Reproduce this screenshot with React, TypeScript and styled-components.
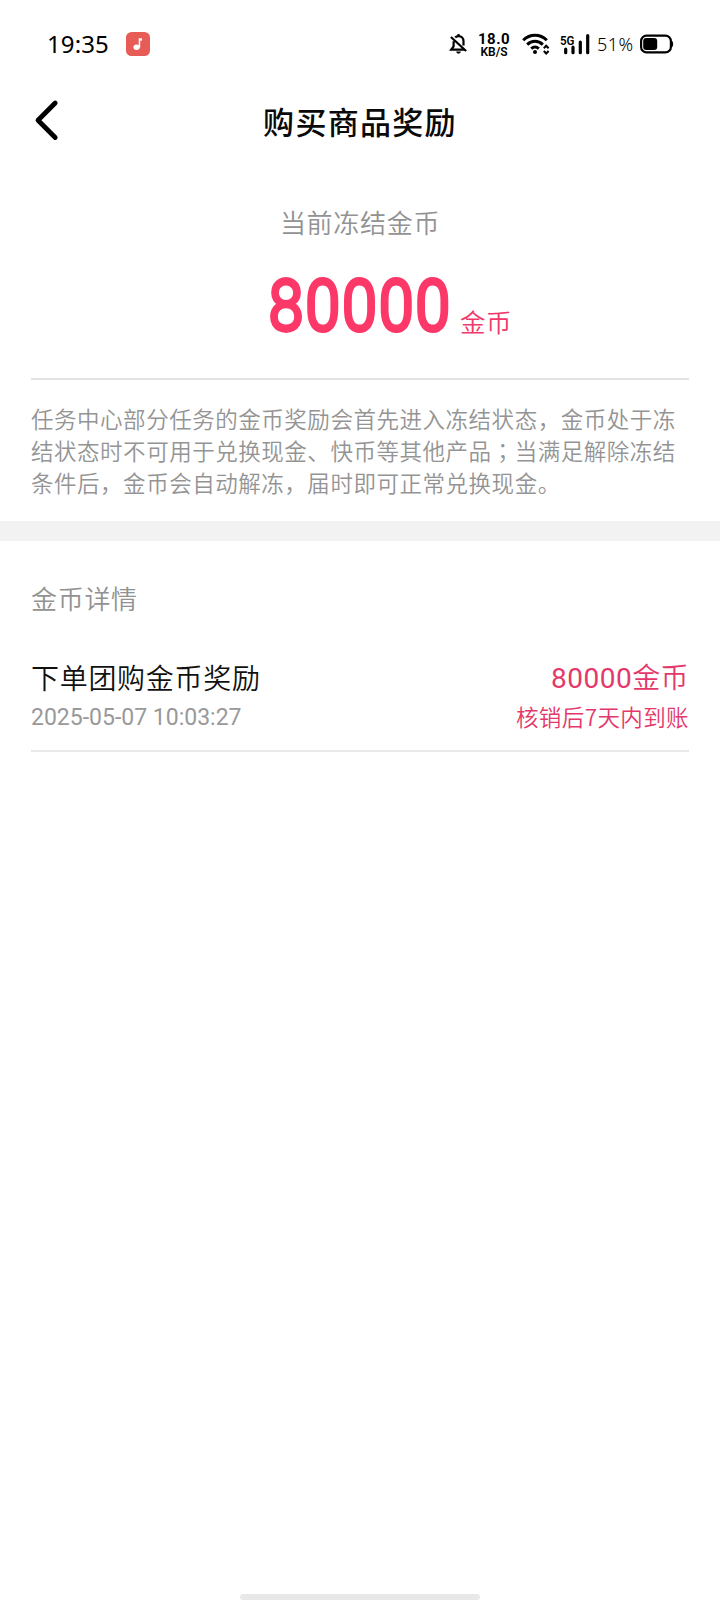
import React from "react";
import styled, { createGlobalStyle } from "styled-components";

const GlobalStyle = createGlobalStyle`
  * { box-sizing: border-box; }
  body {
    margin: 0;
    background: #fff;
    font-family: "Noto Sans CJK SC", sans-serif;
  }
`;

const Screen = styled.div`
  width: 720px;
  height: 1600px;
  display: flex;
  flex-direction: column;
  background: #fff;
  overflow: hidden;
`;

const StatusBar = styled.div`
  height: 88px;
  padding: 0 46px 0 47px;
  display: flex;
  justify-content: space-between;
  align-items: center;
  color: #000;
`;

const StatusGroup = styled.div`
  display: flex;
  align-items: center;
`;

const Clock = styled.span`
  width: 63px;
  font: 400 24px/30px "Noto Sans", sans-serif;
  letter-spacing: 0.1px;
  white-space: nowrap;
`;

const MusicIcon = styled.svg`
  width: 24px;
  height: 24px;
  margin-left: 16px;
`;

const Glyph = styled.svg<{ $w: number; $h: number; $left?: number }>`
  width: ${(p) => p.$w}px;
  height: ${(p) => p.$h}px;
  margin-left: ${(p) => p.$left ?? 0}px;
  flex: none;
  overflow: visible;
`;

const NetSpeed = styled.div`
  width: 32px;
  margin-left: 9px;
  margin-right: 1px;
  padding-top: 3px;
  display: flex;
  flex-direction: column;
  align-items: center;
  font-family: Roboto, sans-serif;
  white-space: nowrap;
`;

const SpeedValue = styled.span`
  font-size: 15px;
  font-weight: 700;
  line-height: 13px;
  letter-spacing: 0.5px;
`;

const SpeedUnit = styled.span`
  font-size: 12px;
  font-weight: 600;
  line-height: 13px;
`;

const Battery = styled.span`
  width: 37px;
  margin-left: 6px;
  font: 350 18px/22px "Noto Sans", sans-serif;
  letter-spacing: 0.5px;
  white-space: nowrap;
`;

const Header = styled.header`
  height: 72px;
  padding: 0 32px;
  display: grid;
  grid-template-columns: 40px 1fr 40px;
  align-items: start;
`;

const BackButton = styled.button`
  padding: 11px 0 0 2px;
  border: 0;
  background: none;
  display: flex;
`;

const Title = styled.h1`
  margin: 10px 0 0;
  font-size: 31px;
  line-height: 46px;
  font-weight: 500;
  letter-spacing: 1.3px;
  text-align: center;
  color: #0a0a0a;
`;

const Summary = styled.section`
  margin: 0 31px;
  height: 220px;
  display: flex;
  flex-direction: column;
  align-items: center;
  border-bottom: 2px solid #e3e3e3;
`;

const SummaryLabel = styled.div`
  margin-top: 42px;
  font-size: 26px;
  line-height: 40px;
  font-weight: 350;
  letter-spacing: 0.7px;
  color: #929292;
`;

const AmountRow = styled.div`
  width: 100%;
  margin-top: 19px;
  display: grid;
  grid-template-columns: 1fr 184px 1fr;
  align-items: start;
  color: #fc3869;
`;

const Amount = styled.div`
  grid-column: 2;
  padding: 3px 0 0 2px;
  display: flex;
  justify-content: center;
  font: 300 70px/84px Roboto, sans-serif;
  letter-spacing: 3.1px;
  -webkit-text-stroke: 4.8px #fc3869;
  stroke-linejoin: round;
  white-space: nowrap;
`;

const AmountDigits = styled.span`
  transform: scaleX(0.875);
`;

const AmountUnit = styled.span`
  margin: 40px 0 0 8px;
  font-size: 25.5px;
  line-height: 40px;
  letter-spacing: 0.5px;
  font-weight: 350;
  color: #f0386a;
`;

const Notice = styled.p`
  margin: 0;
  height: 141px;
  padding: 22px 0 0 31px;
  font-size: 22.5px;
  line-height: 32px;
  font-weight: 350;
  letter-spacing: 0.53px;
  color: #949494;
  white-space: nowrap;
`;

const CenteredMark = styled.span`
  font-family: "Noto Sans CJK TC", sans-serif;
`;

const Divider = styled.div`
  height: 20px;
  background: #f2f2f2;
`;

const Details = styled.section`
  padding: 37px 31px 0;
  flex: 1;
`;

const DetailsTitle = styled.h2`
  margin: 0;
  font-size: 26px;
  line-height: 40px;
  font-weight: 350;
  letter-spacing: 0.7px;
  color: #929292;
`;

const Item = styled.div`
  margin-top: 38px;
  height: 96px;
  display: grid;
  grid-template-columns: 1fr auto;
  grid-template-rows: 44px 36px;
  border-bottom: 2px solid #e9e9e9;
`;

const ItemName = styled.span`
  font-size: 28px;
  line-height: 42px;
  letter-spacing: 0.7px;
  font-weight: 350;
  color: #111;
`;

const ItemAmount = styled.span`
  font: 350 28px/40px "Noto Sans CJK SC", sans-serif;
  letter-spacing: 0.4px;
  text-align: right;
  color: #e4386a;
`;

const ItemAmountDigits = styled.span`
  font-family: Roboto, sans-serif;
  line-height: 1;
  font-weight: 400;
  letter-spacing: 0.5px;
`;

const ItemTime = styled.span`
  font: 400 23px/36px Roboto, "Noto Sans CJK SC", sans-serif;
  color: #999;
`;

const ItemStatus = styled.span`
  font-size: 22.5px;
  line-height: 32px;
  letter-spacing: 0.4px;
  font-weight: 350;
  text-align: right;
  color: #e4386a;
`;

const HomeIndicator = styled.div`
  width: 240px;
  height: 6px;
  align-self: center;
  border-radius: 3px;
  background: #e8e8e8;
`;

export default function App() {
  return (
    <Screen>
      <GlobalStyle />
      <StatusBar>
        <StatusGroup>
          <Clock>19:35</Clock>
          <MusicIcon viewBox="0 0 24 24">
            <rect width="24" height="24" rx="5.5" fill="#e85c58" />
            <ellipse cx="10.6" cy="15.3" rx="3.1" ry="2.7" fill="#fff" />
            <path d="M12.7 15.5V6.2h3.2v2.6h-1.7v6.7z" fill="#fff" />
          </MusicIcon>
        </StatusGroup>
        <StatusGroup>
          <Glyph $w={20} $h={22} viewBox="0 0 20 22" fill="none" stroke="#000" strokeWidth="2.2">
            <path d="M4.6 8.3v5L2.2 16.6h13M6.2 4.4C7 3.5 8.2 3.1 9.5 3.1c3 0 5 2.2 5 5.2v4.3M9.5 1v2M1.9 4l15.2 14" />
            <path d="M7.2 18.6h4.6a2.3 2.1 0 0 1-4.6 0z" fill="#000" stroke="none" />
          </Glyph>
          <NetSpeed>
            <SpeedValue>18.0</SpeedValue>
            <SpeedUnit>KB/S</SpeedUnit>
          </NetSpeed>
          <Glyph $w={28} $h={22} $left={11} viewBox="0 0 28 22" fill="none" stroke="#000" strokeWidth="3">
            <path d="M1.2 7.2c6.8-6.7 16.8-6.7 23.6 0M5.2 11.6c4.5-4.4 11.1-4.4 15.6 0M9.2 15.7c2.3-2 5.3-2 7.6 0" />
            <circle cx="13" cy="19" r="2" fill="#000" stroke="none" />
            <path d="M21.8 15.3l2.4-2.5l2.4 2.5M21.8 18l2.4 2.5l2.4-2.5" strokeWidth="2" />
          </Glyph>
          <Glyph $w={30} $h={22} $left={11} viewBox="0 0 30 22">
            <text x="-1" y="11.8" fontFamily="Roboto, sans-serif" fontSize="13" fontWeight="600" textLength="14.5" lengthAdjust="spacingAndGlyphs">5G</text>
            <path d="M4.7 16v3.7M12 14.2v5.5M19.3 9v10.7M26.7 2.5v17.2" stroke="#000" strokeWidth="3.2" strokeLinecap="round" />
          </Glyph>
          <Battery>51%</Battery>
          <Glyph $w={34} $h={20} $left={6} viewBox="0 0 34 20">
            <rect x="1.1" y="1.6" width="29.8" height="16.8" rx="5.5" fill="none" stroke="#000" strokeWidth="2.2" />
            <rect x="3.2" y="4" width="14" height="12" rx="3" />
            <path d="M31.5 6.5c2.2 1 2.2 6 0 7z" />
          </Glyph>
        </StatusGroup>
      </StatusBar>

      <Header>
        <BackButton aria-label="返回">
          <Glyph $w={26} $h={42} viewBox="0 0 26 42" fill="none" stroke="#000" strokeWidth="4.8" strokeLinecap="round" strokeLinejoin="round">
            <path d="M21.2 4L4 21.3L21.2 38.5" />
          </Glyph>
        </BackButton>
        <Title>购买商品奖励</Title>
      </Header>

      <Summary>
        <SummaryLabel>当前冻结金币</SummaryLabel>
        <AmountRow>
          <Amount>
            <AmountDigits>80000</AmountDigits>
          </Amount>
          <AmountUnit>金币</AmountUnit>
        </AmountRow>
      </Summary>

      <Notice>
        {"任务中心部分任务的金币奖励会首先进入冻结状态\uFF0C金币处于冻"}
        <br />
        结状态时不可用于兑换现金、快币等其他产品
        <CenteredMark>{"\uFF1B"}</CenteredMark>
        当满足解除冻结
        <br />
        {"条件后\uFF0C金币会自动解冻\uFF0C届时即可正常兑换现金。"}
      </Notice>
      <Divider />

      <Details>
        <DetailsTitle>金币详情</DetailsTitle>
        <Item>
          <ItemName>下单团购金币奖励</ItemName>
          <ItemAmount>
            <ItemAmountDigits>80000</ItemAmountDigits>金币
          </ItemAmount>
          <ItemTime>2025-05-07 10:03:27</ItemTime>
          <ItemStatus>核销后7天内到账</ItemStatus>
        </Item>
      </Details>
      <HomeIndicator />
    </Screen>
  );
}
